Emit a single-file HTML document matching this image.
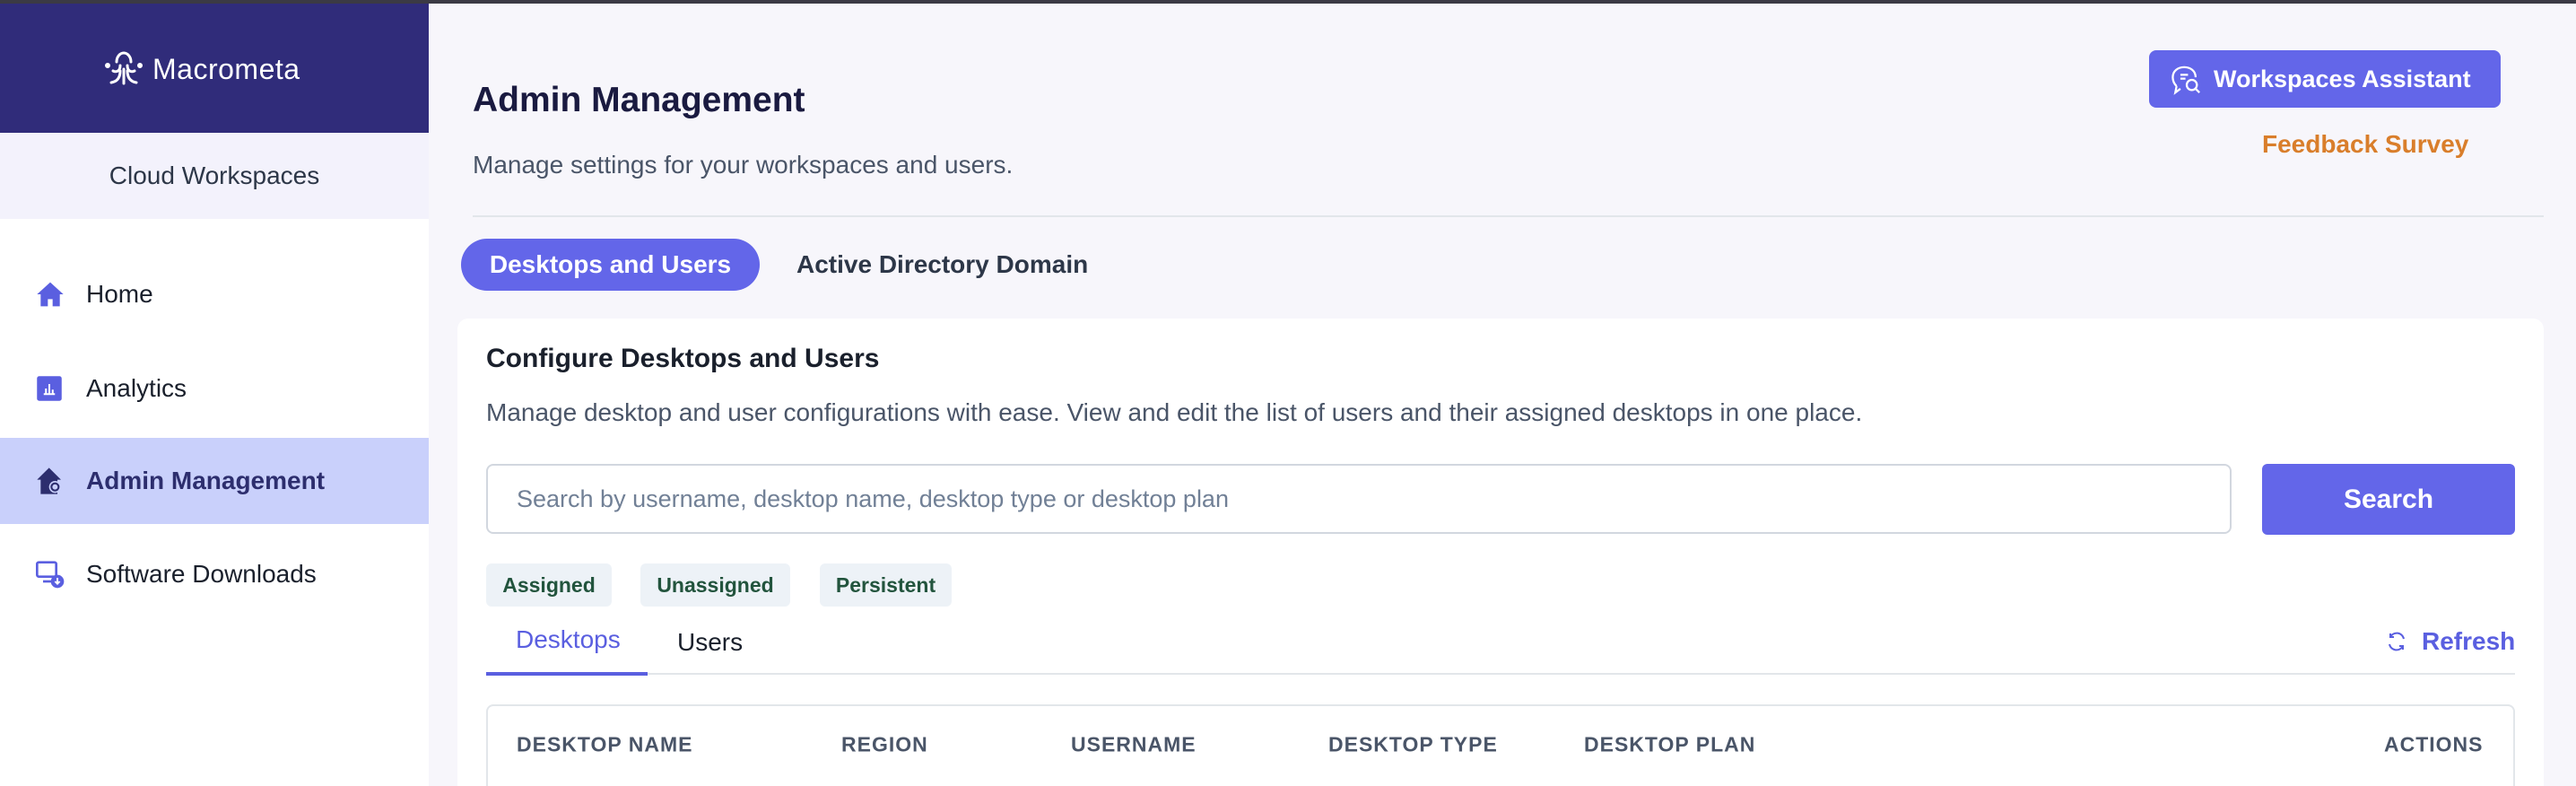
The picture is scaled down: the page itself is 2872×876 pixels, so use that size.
<!DOCTYPE html>
<html style="width:2872px;height:876px;overflow:hidden"><head><meta charset="utf-8">
<style>
*{box-sizing:border-box;margin:0;padding:0}
body{width:2872px;height:876px;overflow:hidden;background:#f7f6fb;font-family:"Liberation Sans",sans-serif;position:relative}
.a{position:absolute;white-space:nowrap}
.side{position:absolute;left:0;top:0;width:478px;height:876px;background:#fff}
.nav{position:absolute;left:96px;font-size:28px;color:#1a202c;transform:translateY(-50%)}
.ic{position:absolute;left:40px;transform:translateY(-50%)}
.th{position:absolute;top:830px;transform:translateY(-50%);font-size:23px;font-weight:bold;color:#4a5568;letter-spacing:1px}
.chip{position:absolute;top:628px;height:48px;background:#edf2f7;border-radius:6px;color:#22543d;font-weight:bold;font-size:23px;line-height:48px;text-align:center}
</style></head><body>
<div class="a" style="left:0;top:0;width:2872px;height:4px;background:#3b3a44;z-index:5"></div>
<div class="side">
  <div class="a" style="left:0;top:0;width:478px;height:148px;background:#302c7a"></div>
  <svg class="a" style="left:115px;top:53px" width="46" height="46" viewBox="0 0 46 46" fill="none" stroke="#fff" stroke-width="3" stroke-linecap="round">
    <path d="M15 16c0-6 4-10 8-10s8 4 8 10"/><path d="M19 20c0 6-4 8-8 6"/><path d="M27 20c0 6 4 8 8 6"/><path d="M19 26c0 8-4 12-10 13"/><path d="M27 26c0 8 4 12 10 13"/><path d="M23 24v16"/><circle cx="5" cy="20" r="1.5"/><circle cx="41" cy="20" r="1.5"/>
  </svg>
  <div class="a" style="left:170px;top:59px;font-size:32px;color:#fff;letter-spacing:0.5px">Macrometa</div>
  <div class="a" style="left:0;top:148px;width:478px;height:96px;background:#f3f2fc"></div>
  <div class="a" style="left:0;top:196px;width:478px;text-align:center;font-size:28px;color:#2d3748;transform:translateY(-50%)">Cloud Workspaces</div>
  <svg class="ic" style="top:328px" width="32" height="32" viewBox="0 0 24 24"><path d="M12 2L1 12h3v10h6v-6h4v6h6V12h3z" fill="#5a5fe0"/></svg>
  <div class="nav" style="top:328px">Home</div>
  <svg class="ic" style="top:433px" width="30" height="30" viewBox="0 0 24 24"><rect x="1" y="1" width="22" height="22" rx="2" fill="#5a5fe0"/><path d="M7 17h10M9 17v-5M12 17V8M15 17v-4" stroke="#fff" stroke-width="1.6"/></svg>
  <div class="nav" style="top:433px">Analytics</div>
  <div class="a" style="left:0;top:488px;width:478px;height:96px;background:#c9d0fb"></div>
  <svg class="ic" style="top:536px" width="32" height="32" viewBox="0 0 24 24"><path d="M11 1L1 11h3v12h14V11h3z" fill="#2d2e6e"/><circle cx="16" cy="17" r="5" fill="#c9d0fb"/><circle cx="16" cy="17" r="3" fill="none" stroke="#2d2e6e" stroke-width="1.6"/></svg>
  <div class="nav" style="top:536px;font-weight:bold;color:#2d2e6e">Admin Management</div>
  <svg class="ic" style="top:640px" width="32" height="32" viewBox="0 0 24 24"><rect x="1" y="2" width="16" height="12" rx="1.5" fill="none" stroke="#5a5fe0" stroke-width="2"/><path d="M6 18h7" stroke="#5a5fe0" stroke-width="2"/><circle cx="18" cy="18" r="5.5" fill="#5a5fe0"/><path d="M18 15v5M16 18l2 2 2-2" stroke="#fff" stroke-width="1.4" fill="none"/></svg>
  <div class="nav" style="top:640px">Software Downloads</div>
</div>

<div class="a" style="left:527px;top:112px;transform:translateY(-50%);font-size:39px;font-weight:bold;color:#1a1a40">Admin Management</div>
<div class="a" style="left:527px;top:184px;transform:translateY(-50%);font-size:28px;color:#4a5568">Manage settings for your workspaces and users.</div>
<div class="a" style="left:2396px;top:56px;width:392px;height:64px;background:#6366e9;border-radius:8px;color:#fff;font-weight:bold;font-size:27px;line-height:64px;padding-left:72px">Workspaces Assistant</div>
<svg class="a" style="left:2420px;top:72px" width="36" height="34" viewBox="0 0 24 24" fill="none" stroke="#fff" stroke-width="1.6"><path d="M4 17c-2-2-3-4-3-7 0-5 4-8 9-8s9 3 9 8"/><path d="M4 17l-1 5 4-3"/><path d="M7 8h6M7 11h4"/><circle cx="16" cy="16" r="4"/><path d="M19 19l3 3"/></svg>
<div class="a" style="left:2522px;top:161px;transform:translateY(-50%);font-size:28px;font-weight:bold;color:#d97e2b">Feedback Survey</div>
<div class="a" style="left:527px;top:240px;width:2309px;height:2px;background:#e2e6ea"></div>

<div class="a" style="left:514px;top:266px;width:333px;height:58px;background:#6366e9;border-radius:29px;color:#fff;font-weight:bold;font-size:28px;line-height:58px;text-align:center">Desktops and Users</div>
<div class="a" style="left:888px;top:295px;transform:translateY(-50%);font-size:28px;font-weight:bold;color:#2d3748">Active Directory Domain</div>

<div class="a" style="left:510px;top:355px;width:2326px;height:540px;background:#fff;border-radius:12px"></div>
<div class="a" style="left:542px;top:400px;transform:translateY(-50%);font-size:30px;font-weight:bold;color:#1a202c">Configure Desktops and Users</div>
<div class="a" style="left:542px;top:460px;transform:translateY(-50%);font-size:28px;color:#4a5568">Manage desktop and user configurations with ease. View and edit the list of users and their assigned desktops in one place.</div>
<div class="a" style="left:542px;top:517px;width:1946px;height:78px;border:2px solid #d2d7df;border-radius:8px;font-size:27px;color:#718096;line-height:74px;padding-left:32px">Search by username, desktop name, desktop type or desktop plan</div>
<div class="a" style="left:2522px;top:517px;width:282px;height:79px;background:#6366e9;border-radius:6px;color:#fff;font-weight:bold;font-size:30px;line-height:79px;text-align:center">Search</div>

<div class="chip" style="left:542px;width:140px">Assigned</div>
<div class="chip" style="left:714px;width:167px">Unassigned</div>
<div class="chip" style="left:914px;width:147px">Persistent</div>

<div class="a" style="left:575px;top:713px;transform:translateY(-50%);font-size:28px;color:#5a5fe0">Desktops</div>
<div class="a" style="left:755px;top:716px;transform:translateY(-50%);font-size:28px;color:#1a202c">Users</div>
<div class="a" style="left:542px;top:750px;width:2262px;height:2px;background:#e2e6ea"></div>
<div class="a" style="left:542px;top:749px;width:180px;height:4px;background:#5a5fe0"></div>
<svg class="a" style="left:2660px;top:703px" width="24" height="24" viewBox="0 0 24 24" fill="none" stroke="#5a5fe0" stroke-width="2"><path d="M20 9a8 8 0 0 0-15-2M4 15a8 8 0 0 0 15 2"/><path d="M5 3v4h4M19 21v-4h-4"/></svg>
<div class="a" style="left:2700px;top:715px;transform:translateY(-50%);font-size:28px;font-weight:bold;color:#5a5fe0">Refresh</div>

<div class="a" style="left:542px;top:785px;width:2262px;height:120px;border:2px solid #e2e6ea;border-radius:8px"></div>
<div class="th" style="left:576px">DESKTOP NAME</div>
<div class="th" style="left:938px">REGION</div>
<div class="th" style="left:1194px">USERNAME</div>
<div class="th" style="left:1481px">DESKTOP TYPE</div>
<div class="th" style="left:1766px">DESKTOP PLAN</div>
<div class="th" style="left:2658px">ACTIONS</div>
</body></html>
